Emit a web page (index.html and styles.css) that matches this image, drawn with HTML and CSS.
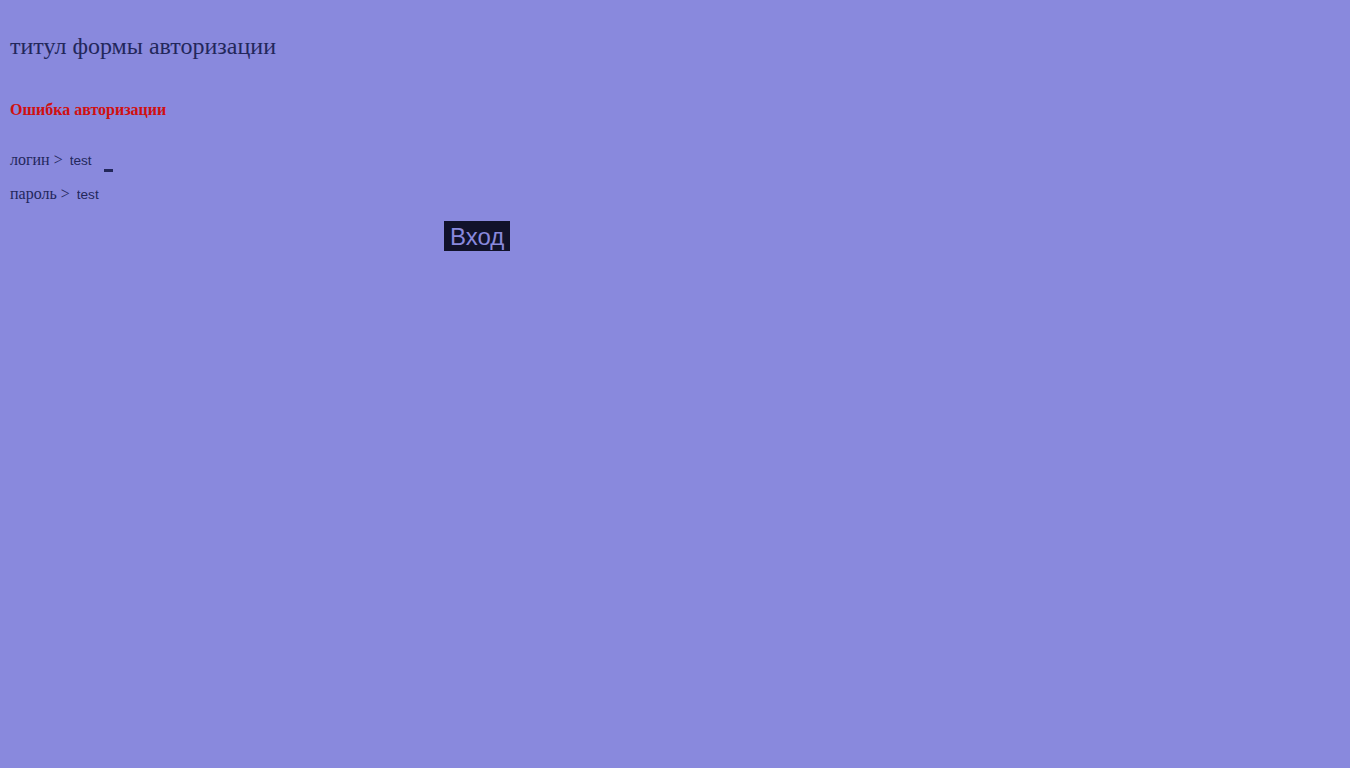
FILE: index.html
```html
<!DOCTYPE html>
<html lang="ru">
<head>
<meta charset="utf-8">
<title>Авторизация</title>
<link rel="stylesheet" href="styles.css">
</head>
<body>
<div class="page">
  <h1 class="title">титул формы авторизации</h1>
  <div class="error">Ошибка авторизации</div>
  <form class="form">
    <div class="row">
      <label class="label">логин &gt;</label>
      <input class="field" type="text" value="test">
      <span class="cursor"></span>
    </div>
    <div class="row">
      <label class="label">пароль &gt;</label>
      <input class="field" type="text" value="test">
    </div>
    <div class="actions">
      <button class="btn" type="button">Вход</button>
    </div>
  </form>
</div>
</body>
</html>
```
FILE: styles.css
```css
html, body {
  margin: 0;
  padding: 0;
  background: #8989dd;
}
body {
  font-family: "Liberation Serif", "Times New Roman", serif;
  color: #23275b;
}
.page {
  padding: 0 10px;
}
.title {
  margin: 0;
  padding-top: 32px;
  font-size: 24px;
  font-weight: normal;
  line-height: 28px;
}
.error {
  margin-top: 40px;
  font-size: 16px;
  font-weight: bold;
  color: #d01010;
  line-height: 20px;
}
.form {
  margin-top: 30px;
}
.row {
  display: flex;
  align-items: center;
  height: 20px;
  margin-bottom: 14px;
  font-size: 16px;
}
.label {
  white-space: nowrap;
}
.field {
  font-family: "Liberation Sans", Arial, sans-serif;
  font-size: 13.6px;
  color: #23275b;
  background: transparent;
  border: none;
  outline: none;
  padding: 0;
  margin-left: 7px;
  width: 26px;
}
.cursor {
  display: inline-block;
  width: 9px;
  height: 3px;
  background: #23275b;
  margin-left: 8px;
  align-self: flex-end;
  margin-bottom: -2px;
}
.actions {
  padding-left: 434px;
  margin-top: 17px;
}
.btn {
  font-family: "Liberation Sans", Arial, sans-serif;
  font-size: 24px;
  color: #8989dd;
  background: #11122a;
  border: none;
  padding: 2px 6px 0;
  height: 30px;
  line-height: 28px;
  cursor: pointer;
}
```
